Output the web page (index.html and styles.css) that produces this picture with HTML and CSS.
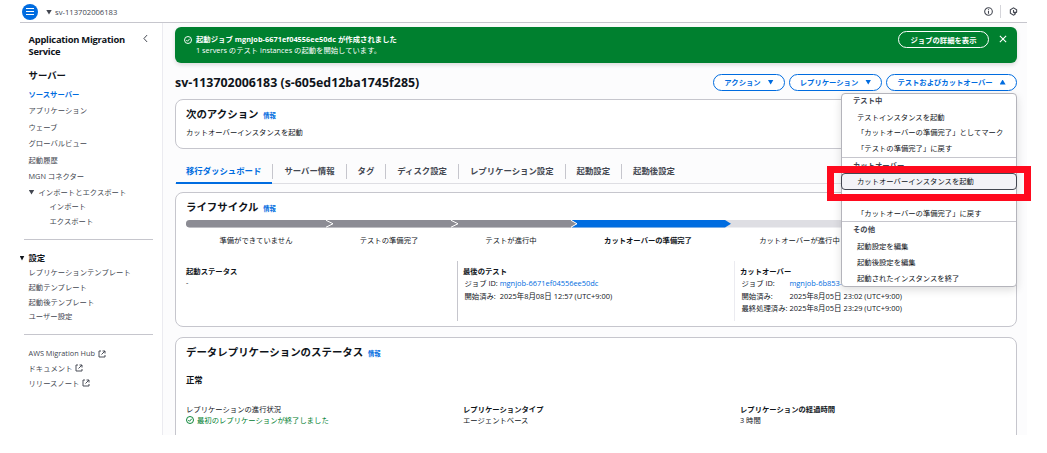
FILE: index.html
```
<!DOCTYPE html>
<html lang="ja">
<head>
  <meta charset="UTF-8" />
  <meta name="viewport" content="width=device-width, initial-scale=1.0"/>
  <title>Application Migration Service</title>
  <link rel="stylesheet" href="styles.css">
</head>
<body>
  <svg class="defs" aria-hidden="true">
    <symbol id="external" viewBox="0 0 16 16"><path d="M6 2H2v12h12v-4M9 2h5v5M14 2L7 9"/></symbol>
    <symbol id="success" viewBox="0 0 16 16"><circle cx="8" cy="8" r="7"/><path d="M4.5 8l2.5 2.5 4.5-5"/></symbol>
  </svg>
  <div class="app">
    <header class="topbar">
      <button class="menu-btn" aria-label="メニュー">
        <svg viewBox="0 0 16 16"><path d="M4 4.5h8M4 7.5h8M4 10.5h8"/></svg>
      </button>
      <span class="caret"></span>
      <span class="crumb">sv-113702006183</span>
      <div class="tools">
        <svg viewBox="0 0 16 16"><circle cx="8" cy="8" r="6.8"/><path d="M8 7v5M8 4v1.7"/></svg>
        <span class="tools-sep"></span>
        <svg viewBox="0 0 16 16"><path d="M11 13L8 14.5 2.4 11.2V4.8L8 1.5l5.6 3.3v4.7M14 9.5H8M8 5.5v4l4 3"/></svg>
      </div>
    </header>
    <div class="body">
      <nav class="sidebar">
        <div class="side-title">
          <h2>Application Migration Service</h2>
          <svg class="collapse" viewBox="0 0 8 14"><path d="M6.5 1.5L1.5 7l5 5.5"/></svg>
        </div>
        <h3>サーバー</h3>
        <ul class="links">
          <li class="active">ソースサーバー</li>
          <li>アプリケーション</li>
          <li>ウェーブ</li>
          <li>グローバルビュー</li>
          <li>起動履歴</li>
          <li>MGN コネクター</li>
        </ul>
        <ul class="links dense">
          <li><span class="caret"></span>インポートとエクスポート</li>
          <li class="sub">インポート</li>
          <li class="sub">エクスポート</li>
        </ul>
        <hr>
        <h4><span class="caret"></span>設定</h4>
        <ul class="links dense">
          <li>レプリケーションテンプレート</li>
          <li>起動テンプレート</li>
          <li>起動後テンプレート</li>
          <li>ユーザー設定</li>
        </ul>
        <hr>
        <ul class="links dense">
          <li>AWS Migration Hub <svg class="ext"><use href="#external"/></svg></li>
          <li>ドキュメント <svg class="ext"><use href="#external"/></svg></li>
          <li>リリースノート <svg class="ext"><use href="#external"/></svg></li>
        </ul>
      </nav>
      <main class="content">
        <div class="flash">
          <svg class="ok"><use href="#success"/></svg>
          <div class="flash-text">
            <b>起動ジョブ mgnjob-6671ef04556ee50dc が作成されました</b>
            <p>1 servers のテスト instances の起動を開始しています。</p>
          </div>
          <button class="pill light">ジョブの詳細を表示</button>
          <svg class="close" viewBox="0 0 14 14"><path d="M1.5 1.5l11 11M12.5 1.5l-11 11"/></svg>
        </div>
        <div class="page-head">
          <h1>sv-113702006183 (s-605ed12ba1745f285)</h1>
          <button class="pill w-action">アクション<span class="caret"></span></button>
          <button class="pill w-repl">レプリケーション<span class="caret"></span></button>
          <div class="dropdown">
            <button class="pill w-test">テストおよびカットオーバー<span class="caret up"></span></button>
            <div class="menu">
              <div class="group">テスト中</div>
              <div class="item">テストインスタンスを起動</div>
              <div class="item">「カットオーバーの準備完了」としてマーク</div>
              <div class="item">「テストの準備完了」に戻す</div>
              <div class="group line">カットオーバー</div>
              <div class="item selected">カットオーバーインスタンスを起動</div>
              <div class="item after-gap">「カットオーバーの準備完了」に戻す</div>
              <div class="group line">その他</div>
              <div class="item">起動設定を編集</div>
              <div class="item">起動後設定を編集</div>
              <div class="item">起動されたインスタンスを終了</div>
              <div class="callout"></div>
            </div>
          </div>
        </div>
        <section class="card next">
          <h2>次のアクション <a>情報</a></h2>
          <p>カットオーバーインスタンスを起動</p>
        </section>
        <div class="tabs">
          <div class="tab on">移行ダッシュボード</div>
          <div class="tab">サーバー情報</div>
          <div class="tab">タグ</div>
          <div class="tab">ディスク設定</div>
          <div class="tab">レプリケーション設定</div>
          <div class="tab">起動設定</div>
          <div class="tab">起動後設定</div>
        </div>
        <section class="card life">
          <h2>ライフサイクル <a>情報</a></h2>
          <svg class="track" viewBox="0 0 820 8">
            <rect width="820" height="7.5" rx="3.7" fill="#dedee3"/>
            <path d="M386 0h153l6 3.75-6 3.75H386z" fill="#006ce0"/>
            <path d="M3.7 0H385l6 3.75-6 3.75H3.7a3.75 3.75 0 0 1 0-7.5z" fill="#8c8c94"/>
            <path class="chev" d="M140 .3l7 3.45-7 3.45M265 .3l7 3.45-7 3.45M385 .3l6 3.45-6 3.45"/>
          </svg>
          <div class="steps">
            <span>準備ができていません</span>
            <span>テストの準備完了</span>
            <span>テストが進行中</span>
            <span class="current">カットオーバーの準備完了</span>
            <span>カットオーバーが進行中</span>
          </div>
          <div class="cols">
            <div class="col">
              <b>起動ステータス</b>
              <p>-</p>
            </div>
            <div class="col">
              <b>最後のテスト</b>
              <dl>
                <dt>ジョブ ID:</dt><dd><a>mgnjob-6671ef04556ee50dc</a></dd>
                <dt>開始済み:</dt><dd>2025年8月08日 12:57 (UTC+9:00)</dd>
              </dl>
            </div>
            <div class="col">
              <b>カットオーバー</b>
              <dl>
                <dt>ジョブ ID:</dt><dd><a>mgnjob-6b853-</a></dd>
                <dt>開始済み:</dt><dd>2025年8月05日 23:02 (UTC+9:00)</dd>
                <dt>最終処理済み:</dt><dd>2025年8月05日 23:29 (UTC+9:00)</dd>
              </dl>
            </div>
          </div>
        </section>
        <section class="card repl">
          <h2>データレプリケーションのステータス <a>情報</a></h2>
          <h3>正常</h3>
          <div class="facts">
            <div>レプリケーションの進行状況<p class="done"><svg class="ok"><use href="#success"/></svg>最初のレプリケーションが終了しました</p></div>
            <div><b>レプリケーションタイプ</b><p>エージェントベース</p></div>
            <div><b>レプリケーションの経過時間</b><p>3 時間</p></div>
          </div>
        </section>
      </main>
    </div>
  </div>
</body>
</html>
```
FILE: styles.css
```
* {
  box-sizing: border-box;
}
body {
  margin: 0;
  background: #fff;
  color: #0f141a;
  font-family: "Open Sans", "Noto Sans CJK JP", sans-serif;
  font-size: 7.34px;
  line-height: 11px;
}
h1, h2, h3, h4, p, ul, dl, dd {
  margin: 0;
  padding: 0;
}
ul {
  list-style: none;
}
svg {
  fill: none;
  stroke: currentColor;
  stroke-width: 1.9;
  flex: none;
}
a {
  color: #006ce0;
}
.defs {
  display: none;
}
.app {
  width: 1007px;
  height: 435px;
  margin-left: 20px;
}
.caret {
  display: inline-block;
  width: 6px;
  height: 5px;
  background: currentColor;
  clip-path: polygon(0 0, 100% 0, 50% 100%);
}
.caret.up {
  clip-path: polygon(50% 0, 100% 100%, 0 100%);
}

/* top bar */
.topbar {
  display: flex;
  align-items: center;
  height: 23px;
  border-bottom: 1px solid #c6c6cd;
  color: #424650;
}
.menu-btn {
  width: 16px;
  height: 16px;
  margin: 1px 8px 0 2px;
  padding: 0;
  border: none;
  border-radius: 50%;
  background: #006ce0;
  color: #fff;
}
.menu-btn svg {
  display: block;
  width: 16px;
  height: 16px;
  stroke-width: 1;
}
.topbar .caret {
  margin-top: 2px;
}
.crumb {
  margin: 3px 0 0 3px;
  font-size: 7.65px;
}
.tools {
  display: flex;
  align-items: center;
  margin: 1px 9px 0 auto;
}
.tools svg {
  width: 9px;
  height: 9px;
}
.tools-sep {
  width: 1px;
  height: 13px;
  margin: 0 8px 0 7px;
  background: #d5d5da;
}

.body {
  display: flex;
  height: 412px;
  overflow-x: visible;
  overflow-y: clip;
}

/* side navigation */
.sidebar {
  width: 143px;
  flex: none;
  padding: 11px 9px 0 4px;
  border-right: 1px solid #ebebf0;
}
.side-title {
  display: flex;
  justify-content: space-between;
  padding-left: 4.5px;
}
.side-title h2 {
  width: 110px;
  font-size: 9.4px;
  letter-spacing: -0.25px;
  line-height: 11.5px;
}
.collapse {
  width: 5px;
  height: 9px;
  margin: 0 5px 0 0;
  color: #424650;
  stroke-width: 1.6;
}
.sidebar h3 {
  margin: 11px 0 2.3px;
  padding-left: 4.5px;
  font-size: 9.4px;
  line-height: 16px;
}
.sidebar h4 {
  display: flex;
  align-items: center;
  margin-left: -4.5px;
  font-size: 8.4px;
  line-height: 14px;
}
.sidebar h4 .caret {
  width: 5px;
  margin-right: 4px;
}
.links {
  padding-left: 4.5px;
  color: #424650;
}
.links li {
  display: flex;
  align-items: center;
  height: 16.4px;
}
.links.dense li {
  height: 14.8px;
}
.links .active {
  color: #006ce0;
  font-weight: 700;
}
.links .caret {
  margin-right: 4px;
}
.links .sub {
  padding-left: 21px;
}
.ext {
  width: 8px;
  height: 8px;
  margin-left: 3px;
}
.sidebar hr {
  height: 1px;
  margin: 10px 0 11px;
  border: none;
  background: #c6c6cd;
}

/* main area */
.content {
  display: flex;
  flex-direction: column;
  width: 864px;
  padding: 4px 10px 0 12px;
  background: #fcfcfd;
}
.flash {
  display: flex;
  flex: none;
  height: 36px;
  padding: 7px 10px 0 9px;
  border-radius: 6px;
  background: #00802f;
  color: #fff;
  box-shadow: 0 2px 4px #0002;
}
.ok {
  width: 8px;
  height: 8px;
}
.flash .ok {
  margin: 2px 4px 0 0;
}
.flash-text {
  flex: 1;
  line-height: 10.5px;
}
.flash-text b {
  letter-spacing: 0.04px;
}
.pill {
  display: flex;
  align-items: center;
  justify-content: center;
  height: 17px;
  padding: 0;
  border: 1px solid #006ce0;
  border-radius: 9px;
  background: #fff;
  color: #006ce0;
  font: inherit;
  font-weight: 700;
  line-height: 14px;
}
.pill .caret {
  margin-left: 7px;
}
.pill.light {
  width: 91px;
  margin-top: -3px;
  border-color: #fff;
  background: none;
  color: #fff;
}
.close {
  width: 8px;
  height: 8px;
  margin: 1px 0 0 10px;
}
.page-head {
  display: flex;
  flex: none;
  align-items: center;
  gap: 4px;
  height: 36px;
  padding-top: 2px;
}
.page-head h1 {
  flex: 1;
  padding-top: 1px;
  font-size: 12.4px;
  line-height: 16px;
}
.w-action { width: 72px; }
.w-repl { width: 93px; }
.w-test { width: 131px; }

/* open dropdown, lies over the cards */
.dropdown {
  position: relative;
}
.menu {
  position: absolute;
  z-index: 2;
  top: 19px;
  right: 0;
  width: 176px;
  height: 194px;
  border: 1px solid #b4b4bb;
  border-radius: 4px;
  background: #fff;
  box-shadow: 0 3px 8px #0002;
}
.group {
  height: 16px;
  padding-left: 11px;
  color: #424650;
  font-weight: 700;
  line-height: 13.5px;
}
.group.line {
  border-top: 1px solid #c6c6cd;
  line-height: 15px;
}
.item {
  height: 15.8px;
  padding-left: 15px;
  line-height: 15px;
  white-space: nowrap;
}
.item.selected {
  height: 17px;
  margin: 0 -1px;
  border: 1px solid #424650;
  border-radius: 4px;
  background: #f3f3f7;
  line-height: 15px;
}
.item.after-gap {
  margin-top: 15px;
  line-height: 16px;
}
.group.line ~ .group.line ~ .item {
  height: 16px;
  line-height: 18px;
}
.callout {
  position: absolute;
  top: 72px;
  left: -15px;
  width: 204px;
  height: 35px;
  border: 7px solid #ff0a1e;
}

.card {
  flex: none;
  padding: 0 10px;
  border: 1px solid #c6c6cd;
  border-radius: 8px;
  background: #fff;
}
.card h2 {
  font-size: 10.45px;
  line-height: 14px;
}
.card h2 a {
  margin-left: 2px;
  font-size: 6.3px;
}
.next {
  height: 50px;
  padding-top: 7px;
}
.next p {
  margin-top: 4px;
}
.tabs {
  display: flex;
  flex: none;
  height: 35px;
  margin-bottom: 8px;
  padding-top: 15px;
  border-bottom: 1px solid #dedee3;
  font-size: 8.4px;
  font-weight: 700;
  line-height: 14px;
  color: #424650;
}
.tab {
  height: 15px;
  padding: 0 11px;
  border-left: 1px solid #c6c6cd;
}
.tab.on {
  height: 20px;
  margin-left: 1px;
  padding: 0 11px 0 10px;
  border-left: none;
  border-bottom: 2.5px solid #006ce0;
  color: #006ce0;
}

/* lifecycle */
.life {
  height: 135px;
  padding-top: 7px;
}
.track {
  display: block;
  width: 820px;
  height: 8px;
  margin-top: 4px;
  stroke: none;
}
.chev {
  stroke: #fff;
  stroke-width: 1;
}
.steps {
  display: grid;
  grid-template-columns: 140px 126px 118px 156px 147px 1fr;
  margin-top: 7px;
  text-align: center;
}
.current {
  font-weight: 700;
}
.cols {
  display: flex;
  height: 60px;
  margin-top: 15px;
}
.col {
  flex: none;
  width: 277px;
  padding: 5px 0 0 5px;
  border-left: 1px solid #c6c6cd;
}
.col:first-child {
  width: 271px;
  padding-left: 0;
  border-left: none;
}
.col:nth-child(3) {
  border-left-color: #ebebf0;
}
.col b, .facts b {
  display: block;
}
dl {
  display: grid;
  grid-template-columns: auto 1fr;
  column-gap: 2px;
  padding-left: 1.5px;
  line-height: 12.6px;
}
dd {
  font-size: 7.45px;
}

/* replication */
.repl {
  height: 110px;
  margin-top: 10px;
  padding-top: 7px;
}
.repl h3 {
  margin-top: 12px;
  font-size: 8.4px;
  line-height: 13px;
}
.facts {
  display: grid;
  grid-template-columns: 277px 277px 1fr;
  margin-top: 18px;
}
.facts p {
  margin-top: -0.5px;
}
.done {
  display: flex;
  align-items: center;
  gap: 3px;
  color: #00802f;
}
```
